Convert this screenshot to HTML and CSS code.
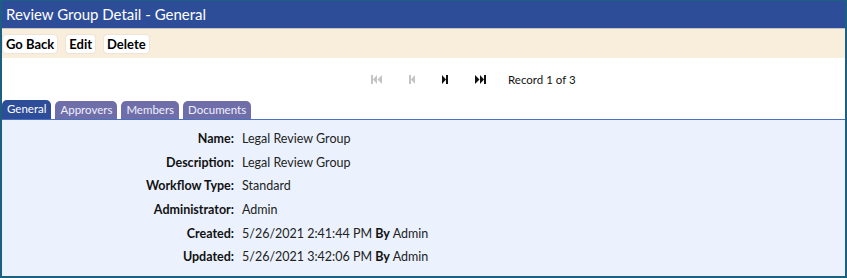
FILE: index.html
```html
<!DOCTYPE html>
<html>
<head>
<meta charset="utf-8">
<link rel="stylesheet" href="styles.css">
</head>
<body>
<div class="frame">
  <div class="header">Review Group Detail - General</div>
  <div class="toolbar">
    <button class="btn">Go Back</button>
    <button class="btn">Edit</button>
    <button class="btn">Delete</button>
  </div>
  <div class="pager">
    <svg class="pi off" width="11" height="9" viewBox="0 0 11 9"><rect x="0" y="0" width="2" height="9"/><path d="M6 0V9L2 4.5Z"/><path d="M11 0V9L6.5 4.5Z"/></svg>
    <svg class="pi off" width="6" height="9" viewBox="0 0 6 9"><rect x="0" y="0" width="2" height="9"/><path d="M6 0V9L2 4.5Z"/></svg>
    <svg class="pi" width="6" height="9" viewBox="0 0 6 9"><path d="M0 0V9L4 4.5Z"/><rect x="4" y="0" width="2" height="9"/></svg>
    <svg class="pi" width="11" height="9" viewBox="0 0 11 9"><path d="M0 0V9L4.5 4.5Z"/><path d="M5 0V9L9 4.5Z"/><rect x="9" y="0" width="2" height="9"/></svg>
    <span class="rec">Record 1 of 3</span>
  </div>
  <div class="tabs">
    <span class="tab active">General</span>
    <span class="tab">Approvers</span>
    <span class="tab">Members</span>
    <span class="tab">Documents</span>
  </div>
  <div class="content">
    <div class="lbl">Name:</div><div class="val">Legal Review Group</div>
    <div class="lbl">Description:</div><div class="val">Legal Review Group</div>
    <div class="lbl">Workflow Type:</div><div class="val">Standard</div>
    <div class="lbl">Administrator:</div><div class="val">Admin</div>
    <div class="lbl">Created:</div><div class="val">5/26/2021 2:41:44 PM <b>By</b> Admin</div>
    <div class="lbl">Updated:</div><div class="val">5/26/2021 3:42:06 PM <b>By</b> Admin</div>
  </div>
</div>
</body>
</html>
```
FILE: styles.css
```css
html, body { margin: 0; padding: 0; background: #fff; }
body { font-family: Lato, "Open Sans", sans-serif; }
.frame {
  width: 847px; height: 278px; box-sizing: border-box;
  border: 2px solid #1d5f80; border-top-width: 1px;
  display: flex; flex-direction: column; background: #ebf2fe;
}
.header {
  height: 27px; background: #2e4d98; color: #fff;
  font-size: 15px; line-height: 27px; padding-left: 4px;
  border-bottom: 1px solid #c9c4c4;
}
.toolbar {
  height: 29px; background: #f9eedc; display: flex; align-items: center;
  gap: 7px; padding-left: 0;
}
.btn {
  font: bold 13px Lato, "Open Sans", sans-serif; color: #000;
  background: #fff; border: 1px solid #ece4d6; border-radius: 4px;
  height: 20px; padding: 0 3px; margin: 0;
}
.pager {
  height: 42px; background: #fff; display: flex; align-items: center;
  padding-left: 369px; gap: 0;
}
.pi { fill: #111; }
.pi.off { fill: #c4c4c4; }
.pager .pi:nth-child(1) { margin-right: 27px; }
.pager .pi:nth-child(2) { margin-right: 27px; }
.pager .pi:nth-child(3) { margin-right: 27px; }
.pager .pi:nth-child(4) { margin-right: 22px; }
.rec { font-size: 11.5px; color: #111; }
.tabs {
  display: flex; gap: 4px; background: #fff; padding-left: 0;
  border-bottom: 1px solid #4d6fc2; height: 19px; align-items: flex-end;
}
.tab {
  height: 18px; line-height: 18px; font-size: 11.5px; color: #eef;
  background: #6f6ea8; padding: 0 5px; border-radius: 5px 5px 0 0;
}
.tab.active { background: #2e4d98; color: #fff; height: 19px; }
.content {
  flex: 1; display: grid; grid-template-columns: 232px 1fr;
  grid-auto-rows: 23.6px; column-gap: 8px; padding-top: 7px;
  font-size: 12.5px; color: #222; align-items: center;
}
.lbl { text-align: right; font-weight: bold; color: #111; }
.val b { color: #111; }
```
